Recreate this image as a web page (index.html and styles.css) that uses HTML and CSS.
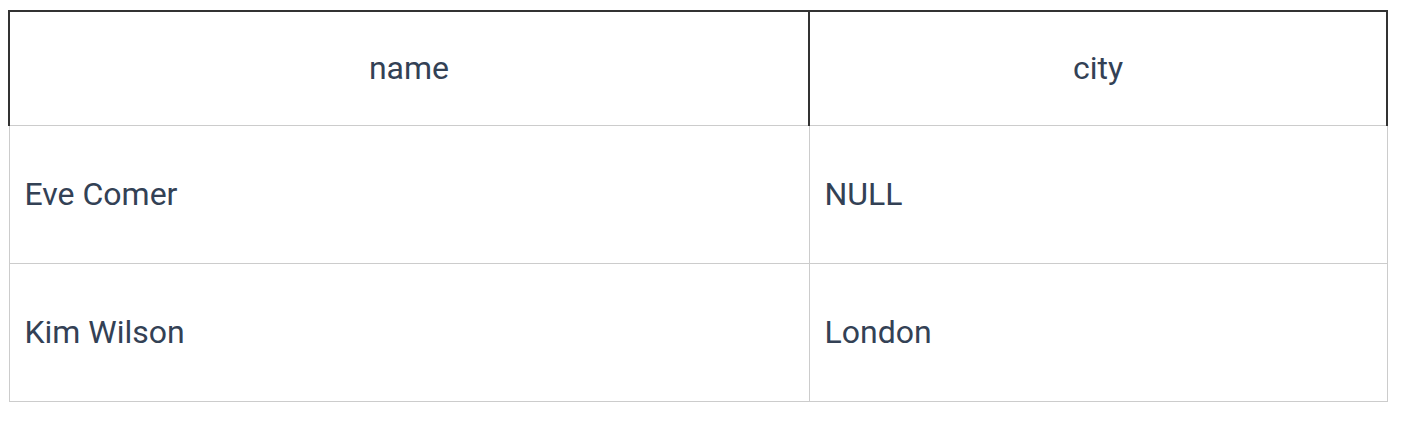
FILE: index.html
```html
<!DOCTYPE html>
<html>
<head>
<meta charset="utf-8">
<link rel="stylesheet" href="styles.css">
</head>
<body>
<table class="grid">
  <thead>
    <tr><th class="col-name">name</th><th class="col-city">city</th></tr>
  </thead>
  <tbody>
    <tr><td>Eve Comer</td><td>NULL</td></tr>
    <tr><td>Kim Wilson</td><td>London</td></tr>
  </tbody>
</table>
</body>
</html>
```
FILE: styles.css
```css
html, body { background: #ffffff; }
body {
  margin: 10px 8px 8px 8px;
  font-family: Roboto, "Liberation Sans", sans-serif;
  color: #334155;
}
.grid {
  border-collapse: collapse;
  width: 1380px;
  table-layout: fixed;
  font-size: 32px;
  line-height: 48px;
}
.col-name { width: 766px; }
.grid th {
  font-weight: 400;
  text-align: center;
  border: 2px solid #333333;
  border-bottom: 1px solid #cccccc;
  padding: 32px 16px 33px 16px;
}
.grid td {
  text-align: left;
  border: 1px solid #cccccc;
  padding: 44px 15px 45px 15px;
}
```
